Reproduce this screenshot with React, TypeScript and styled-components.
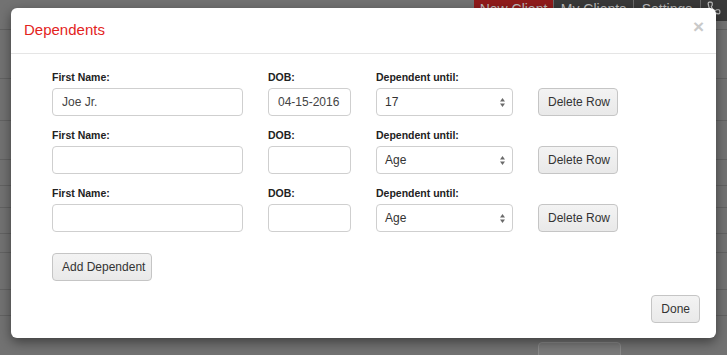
import styled, { createGlobalStyle } from "styled-components";
import { Phone } from "lucide-react";

const GlobalStyle = createGlobalStyle`
  html, body {
    margin: 0;
    padding: 0;
    background: #727272;
  }
  * {
    box-sizing: border-box;
  }
`;

// SECTION - page behind the dimmed backdrop
const Page = styled.div`
  position: relative;
  width: 727px;
  height: 355px;
  overflow: hidden;
  background: #727272;
  font-family: "Liberation Sans", Arial, sans-serif;
`;

const TopBar = styled.div`
  display: flex;
  justify-content: flex-end;
  align-items: flex-start;
  height: 30px;
  border-bottom: 1px solid #616161;
`;

const NavGroup = styled.div`
  display: flex;
  height: 21px;
  background: #393939;
`;

const NavItem = styled.div<{ $active?: boolean; $width: number; $last?: boolean }>`
  width: ${(p) => p.$width}px;
  display: flex;
  justify-content: center;
  align-items: flex-start;
  padding-top: 1px;
  font-size: 14px;
  color: #bdbdbd;
  background: ${(p) => (p.$active ? "#8f1b1b" : "#393939")};
  border-right: ${(p) => (p.$last ? "none" : "1px solid #6a6a6a")};
`;

const BgRow = styled.div<{ $h: number }>`
  height: ${(p) => p.$h}px;
  border-bottom: 1px solid #626262;
`;

const GhostButton = styled.div`
  margin-left: 538px;
  margin-top: 26px;
  width: 83px;
  height: 20px;
  border: 1px solid #8a8a8a;
  border-radius: 4px;
  background: #7a7a7a;
`;

// SECTION - modal
const Modal = styled.div`
  position: absolute;
  top: 8px;
  left: 11px;
  width: 705px;
  height: 330px;
  background: #fff;
  border-radius: 6px;
  box-shadow: 0 4px 12px rgba(0, 0, 0, 0.45);
  display: flex;
  flex-direction: column;
  color: #333;
`;

const Header = styled.div`
  display: flex;
  justify-content: space-between;
  align-items: center;
  height: 46px;
  padding: 0 12px 2px 13px;
  border-bottom: 1px solid #e5e5e5;
`;

const Title = styled.h4`
  margin: 0;
  font-size: 15px;
  font-weight: normal;
  color: #e3241d;
`;

const Close = styled.span`
  font-size: 19px;
  font-weight: bold;
  color: #c9c9c9;
  line-height: 1;
  margin-top: -6px;
`;

const Body = styled.div`
  flex: 1;
  display: flex;
  flex-direction: column;
  padding: 16px 16px 15px 41px;
`;

const Row = styled.div`
  display: grid;
  grid-template-columns: 191px 83px 137px 80px;
  column-gap: 25px;
  row-gap: 4px;
  margin-bottom: 12px;
`;

const Label = styled.label`
  font-size: 10.5px;
  font-weight: bold;
  line-height: 14px;
  color: #222;
`;

const TextInput = styled.input`
  height: 28px;
  width: 100%;
  padding: 0 9px;
  border: 1px solid #cfcfcf;
  border-radius: 4px;
  font-family: "Liberation Sans", Arial, sans-serif;
  font-size: 12px;
  color: #444;
  background: #fff;
  outline: none;
`;

const SelectBox = styled.div`
  height: 28px;
  display: flex;
  align-items: center;
  justify-content: space-between;
  padding: 0 6px 0 8px;
  border: 1px solid #cfcfcf;
  border-radius: 4px;
  font-size: 12px;
  color: #333;
  background: #fff;
`;

const Button = styled.button`
  height: 28px;
  padding: 0 9px;
  border: 1px solid #c5c5c5;
  border-radius: 4px;
  background: linear-gradient(#f3f3f3, #e9e9e9);
  font-family: "Liberation Sans", Arial, sans-serif;
  font-size: 12px;
  color: #333;
  white-space: nowrap;
`;

const AddButton = styled(Button)`
  align-self: flex-start;
  width: 100px;
  margin-top: 9px;
`;

const Footer = styled.div`
  display: flex;
  justify-content: flex-end;
  margin-top: 14px;
`;

const Arrows = () => (
  <svg width="7" height="11" viewBox="0 0 7 11">
    <path d="M3.5 1 L6 4.5 H1 Z" fill="#6a6a6a" />
    <path d="M3.5 10 L6 6.5 H1 Z" fill="#6a6a6a" />
  </svg>
);

type Dependent = { name: string; dob: string; until: string };

const dependents: Dependent[] = [
  { name: "Joe Jr.", dob: "04-15-2016", until: "17" },
  { name: "", dob: "", until: "Age" },
  { name: "", dob: "", until: "Age" },
];

const bgRows = [49, 42, 39, 26, 22, 26, 19, 37, 26];

export default function App() {
  return (
    <>
      <GlobalStyle />
      <Page>
        <TopBar>
          <NavGroup>
            <NavItem $active $width={80}>New Client</NavItem>
            <NavItem $width={80}>My Clients</NavItem>
            <NavItem $width={67}>Settings</NavItem>
            <NavItem $width={26} $last>
              <Phone size={14} color="#bdbdbd" />
            </NavItem>
          </NavGroup>
        </TopBar>
        {bgRows.map((h, i) => (
          <BgRow key={i} $h={h} />
        ))}
        <GhostButton />

        <Modal>
          <Header>
            <Title>Dependents</Title>
            <Close>×</Close>
          </Header>
          <Body>
            {dependents.map((d, i) => (
              <Row key={i}>
                <Label>First Name:</Label>
                <Label>DOB:</Label>
                <Label>Dependent until:</Label>
                <span />
                <TextInput defaultValue={d.name} />
                <TextInput defaultValue={d.dob} />
                <SelectBox>
                  <span>{d.until}</span>
                  <Arrows />
                </SelectBox>
                <Button>Delete Row</Button>
              </Row>
            ))}
            <AddButton>Add Dependent</AddButton>
            <Footer>
              <Button>Done</Button>
            </Footer>
          </Body>
        </Modal>
      </Page>
    </>
  );
}
